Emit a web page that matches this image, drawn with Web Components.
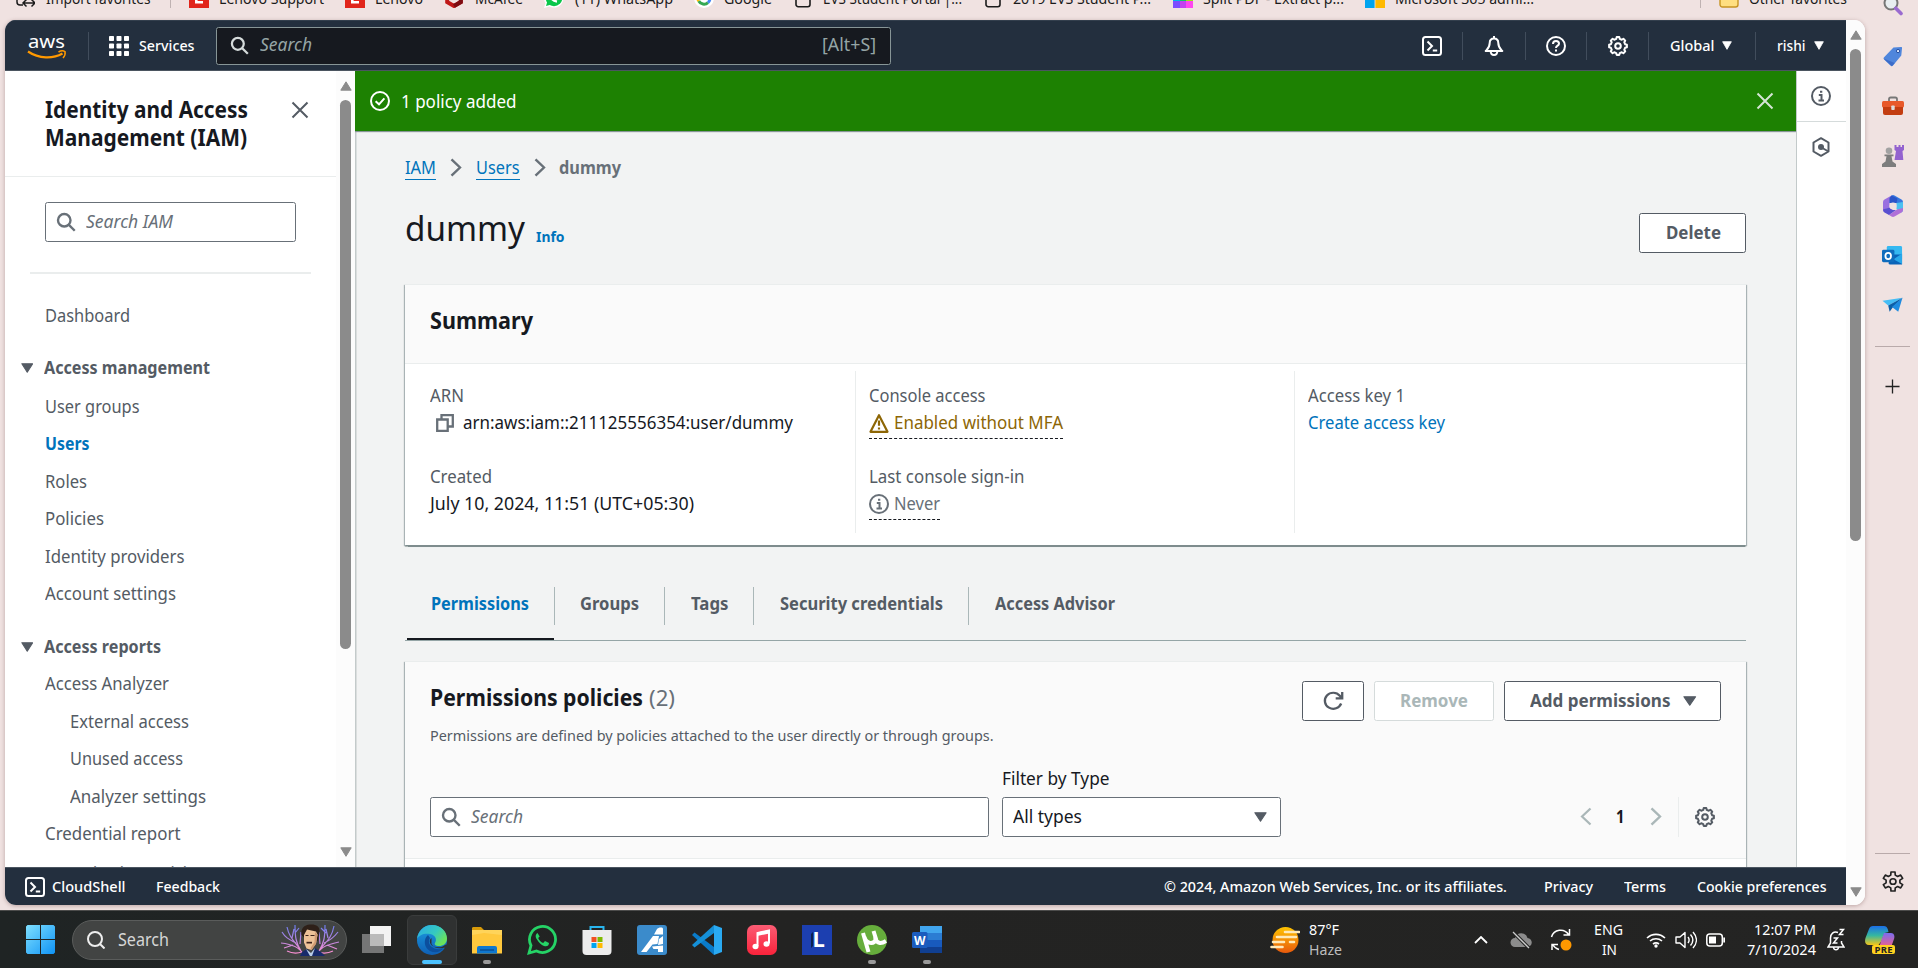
<!DOCTYPE html>
<html lang="en">
<head>
<meta charset="utf-8">
<title>dummy | IAM | Global</title>
<style>
html,body{margin:0;height:100%;overflow:hidden}
body{font-family:"Noto Sans","Open Sans",sans-serif;font-size:17.5px;color:#16191f;background:#f0e2e1}
</style>
</head>
<body>
<desktop-screen></desktop-screen>
<script>
/* Toothed outline used by the settings icons. */
function gear(c, n, ro, ri) {
  let d = '';
  for (let i = 0; i < n; i++) {
    const a = i * 2 * Math.PI / n, s = Math.PI / n;
    [[-.62, ri], [-.38, ro], [.38, ro], [.62, ri]].forEach(([k, r], j) => {
      d += (i + j ? 'L' : 'M') + (c + r * Math.sin(a + k * s)).toFixed(2) + ' ' + (c - r * Math.cos(a + k * s)).toFixed(2);
    });
  }
  return d + 'z';
}
const S = (body, w = 2) => `<g fill="none" stroke="currentColor" stroke-width="${w}">${body}</g>`;

/* name: [viewBox, markup] */
const ICONS = {
  search: ['0 0 16 16', S('<circle cx="6.6" cy="6.6" r="5"/><path d="M10.3 10.3 15 15"/>', 1.9)],
  close: ['0 0 16 16', S('<path d="M2 2l12 12M14 2 2 14"/>', 1.6)],
  tri: ['0 0 12 10', '<path fill="currentColor" stroke="currentColor" stroke-linejoin="round" d="M.8.8h10.4L6 9.3z"/>'],
  triup: ['0 0 12 10', '<path fill="currentColor" stroke="currentColor" stroke-linejoin="round" d="M.8 9.2h10.4L6 .8z"/>'],
  grid: ['0 0 20 20', '<g fill="currentColor">' + [0, 7.5, 15].map(y => [0, 7.5, 15].map(x => `<rect x="${x}" y="${y}" width="5" height="5" rx=".8"/>`).join('')).join('') + '</g>'],
  shell: ['0 0 20 20', S('<rect x="1" y="1" width="18" height="18" rx="2.5"/><path d="M5.5 5.5 10 10l-4.500 4.500M10.800 14.500h4.400"/>')],
  bell: ['0 0 20 20', S('<path stroke-linejoin="round" d="M10 2.500c-3 0-4.300 2-4.300 4.500 0 4.500-1.600 5.500-4 8h16.600c-2.400-2.500-4-3.500-4-8 0-2.500-1.300-4.500-4.300-4.500zM10 0v3M6.700 15.200c0 2.400 1.300 3.700 3.300 3.700s3.300-1.300 3.300-3.700"/>')],
  help: ['0 0 20 20', S('<circle cx="10" cy="10" r="9"/><path d="M7 8c0-2 1.300-3 3-3s3 1 3 2.700c0 2-3 2-3 4.300M10 13.400v2.200"/>')],
  gear: ['0 0 20 20', S(`<path stroke-linejoin="round" d="${gear(10, 8, 9, 7.3)}"/><circle cx="10" cy="10" r="2.800"/>`)],
  gearthin: ['0 0 20 20', S(`<path stroke-linejoin="round" d="${gear(10, 6, 9.300, 6.400)}"/><circle cx="10" cy="10" r="2.700"/>`, 1.5)],
  check: ['0 0 20 20', S('<circle cx="10" cy="10" r="9"/><path d="M5.600 10.200 9 13.300l5.400-6"/>')],
  chev: ['0 0 12 20', S('<path d="M1.500 1.500 10 10l-8.500 8.500"/>', 2.4)],
  chevl: ['0 0 12 20', S('<path d="M10.500 1.500 2 10l8.500 8.500"/>', 2.2)],
  info: ['0 0 20 20', S('<circle cx="10" cy="10" r="9"/><path d="M7.800 9H10.500v5.500M7.500 14.600h5.500M9 5.700h2.300"/>')],
  hex: ['0 0 20 20', S('<path stroke-linejoin="round" d="M10 1.200l7.500 4.300v9L10 18.800l-7.500-4.300v-9z"/>') + '<circle cx="10" cy="10" r="3" fill="currentColor"/>' + S('<path d="M10.500 10.500 17 14.300"/>', 1.8)],
  copy: ['0 0 18 18', S('<path d="M1.200 5.500h10.500v11.300H1.200zM5.500 5.500V1.200h11.300v11.300h-5"/>', 2.3)],
  warn: ['0 0 20 20', S('<path stroke-linejoin="round" d="M10 2.200 18.500 18.800h-17z"/><path d="M10 7.500v5.200M10 14.400v2.200"/>', 2.2)],
  refresh: ['0 0 20 20', S('<path d="M17.300 12.500A8 8 0 1 1 16 4.700l1.500 1.900M18.300 1v6.300h-6.200"/>', 2.2)],
  plus: ['0 0 16 16', S('<path d="M8 .5v15M.5 8h15"/>', 1.4)],
  aws: ['0 0 40 26', '<text x="1" y="14.500" font-family="Noto Sans" font-weight="400" font-size="18.500" fill="#fff" textLength="37" lengthAdjust="spacingAndGlyphs">aws</text><path d="M1 18.500c11 7.500 25 7.500 34.500 2" fill="none" stroke="#f90" stroke-width="2.200"/><path d="M31.500 19c2-1.200 5-1.300 6.500-.4.500 2-.6 4.800-2 6.400" fill="none" stroke="#f90" stroke-width="1.500"/>'],

  /* favourites */
  import: ['0 0 20 20', S('<path d="M8 17H5a3 3 0 0 1-3-3V4M18 4v6M8 15h12M11.500 11.500 8 15l3.500 3.500M16.500 11.500 20 15l-3.500 3.500"/>', 1.5)],
  lenovo: ['0 0 20 20', '<path fill="#e1251b" d="M0 0h20v20H0z"/><path fill="#fff" d="M6 5h2.600v8H14v2.400H6z"/>'],
  mcafee: ['0 0 20 20', '<path d="M3.200 5v9l6.800 4 6.800-4V5L10 8z" fill="none" stroke="#c01818" stroke-width="4"/><path d="M10 18l6.800-4V5" fill="none" stroke="#7e0c12" stroke-width="4"/>'],
  whatsmini: ['0 0 20 20', '<path fill="#fff" d="M10 0a9.800 9.800 0 1 1-4.500 18.600L0 20l1.500-5A9.800 9.800 0 0 1 10 0z"/><circle cx="10" cy="10" r="8.300" fill="#0ac64a"/><path fill="#0ac64a" d="M2 18l1.500-5 4 3.500z"/><path d="M6.500 7c.5 3.500 3 6 6.500 6.500" stroke="#fff" stroke-width="2.500" fill="none"/>'],
  google: ['0 0 20 20', '<circle cx="10" cy="10" r="10" fill="#fff"/><g fill="none" stroke-width="3"><path stroke="#34a853" d="M4.700 13a6 6 0 0 0 9.300 1.600"/><path stroke="#4285f4" d="M14 14.600c1.500-1.200 2-2.600 2-4.600h-6"/><path stroke="#fbbc05" d="M4.700 13a6 6 0 0 1 0-6"/></g>'],
  page: ['0 0 20 20', S('<path d="M3 0v16.500a2.200 2.200 0 0 0 2.200 2.200h9.600a2.200 2.200 0 0 0 2.200-2.200V0"/>', 1.6)],
  mosaic: ['0 0 20 20', '<path fill="#00b5e8" d="M0 6h7v7H0z"/><path fill="#15c46a" d="M7 6h6v7H7z"/><path fill="#9be31c" d="M13 6h7v7h-7z"/><path fill="#7c4dff" d="M0 13h7v7H0z"/><path fill="#c243f0" d="M7 13h6v7H7z"/><path fill="#ff46f0" d="M13 13h7v7h-7z"/>'],
  ms: ['0 0 20 20', '<path fill="#00a4ef" d="M0 10h9.600v10H0z"/><path fill="#ffb900" d="M10.400 10H20v10h-9.600z"/><path fill="#f25022" d="M0 0h9.600v9.600H0z"/><path fill="#7fba00" d="M10.400 0H20v9.600h-9.600z"/>'],
  folder: ['0 0 20 20', '<path d="M1 2h18v14.500a2.500 2.500 0 0 1-2.500 2.500h-13A2.500 2.500 0 0 1 1 16.500z" fill="#ffdf80" stroke="#c79422" stroke-width="1.400"/>'],

  /* edge rail */
  esearch: ['0 0 22 22', '<circle cx="9" cy="9" r="6.500" fill="#e8eef0" stroke="#777" stroke-width="2"/><path d="M13.800 14.200l5.200 5.300" stroke="#9a6bd0" stroke-width="3.600" stroke-linecap="round"/>'],
  tag: ['0 0 22 22', '<path d="M12 1.500 20 1c.8 0 1 .4 1 1l-.8 8-8.700 10.500c-.7.8-1.600.8-2.300.2l-7-6.600c-.7-.7-.7-1.500 0-2.200z" fill="#4f86dc"/><path d="M1.500 13l8.800 8.200 3-3.500z" fill="#3c6cc9"/><circle cx="16.800" cy="5.300" r="1.700" fill="#dceaff" stroke="#234a9c"/>'],
  toolbox: ['0 0 22 22', '<path d="M7 7V4.200C7 3 7.500 2.500 8.700 2.500h4.600c1.200 0 1.700.5 1.700 1.700V7" fill="none" stroke="#777" stroke-width="1.800"/><rect y="6" width="22" height="6.500" rx="1.500" fill="#e8592a"/><path d="M1 12h20v6a2 2 0 0 1-2 2H3a2 2 0 0 1-2-2z" fill="#c33d11"/><rect x="9.300" y="10.500" width="3.400" height="4.500" rx=".8" fill="#ddd"/>'],
  chess: ['0 0 22 22', '<path d="M12.500 0h2v2h2V0h2v2h1.500V0h2v5l-1.500 1 .8 9H12.500l1.500-9-1.500-1z" fill="#9362cf"/><circle cx="7" cy="5.800" r="3.300" fill="#a2a2a2"/><path d="M2.500 9.500h9v1.800H9.500l1 5.200 3.500 2.500v3H0v-3l3.500-2.500 1-5.200h-2z" fill="#7d7d7d"/>'],
  m365: ['0 0 20 22', '<path d="M8.500.5 1.500 4.500A3 3 0 0 0 0 7v8.500l6.500-3V8z" fill="#9a6fe0"/><path d="M8.500.5a3 3 0 0 1 3 0l7 4A3 3 0 0 1 20 7v4.500L13.500 8 6.500 8z" fill="#3578e0"/><path d="M8.500.5 6.500 3v5l7 0 1-4.500z" fill="#2b55c8"/><path d="M20 7v8a3 3 0 0 1-1.500 2.500L13.500 14V8z" fill="#4cc0f0"/><path d="M20 13v2a3 3 0 0 1-1.500 2.500l-7 4a3 3 0 0 1-3 0L6 20l8-5.500z" fill="#b06fd8"/><path d="M0 14.500 6.500 12.500 10 15l3 0L6 20l-4.500-2.500A3 3 0 0 1 0 15z" fill="#5a4fd0"/><circle cx="10" cy="11" r="3.500" fill="#f0e2e1"/>'],
  outlook: ['0 0 22 22', '<rect x="5" y="1" width="16" height="15" rx="1.500" fill="#35b8f1"/><path d="M7 10h14v10.500H8.500A1.500 1.500 0 0 1 7 19z" fill="#0a63b8"/><path d="M21 9v11l-9-5z" fill="#28a8ea"/><rect y="5" width="13" height="13" rx="1.500" fill="#0f6cbd"/><ellipse cx="6.500" cy="11.500" rx="2.900" ry="3.300" fill="none" stroke="#fff" stroke-width="1.900"/>'],
  plane: ['0 0 22 22', '<path d="M21.500 4 .5 7l6 5z" fill="#45bdf5"/><path d="M21.500 4 6.500 12l1.500 6.500 3-4z" fill="#0c5fa8"/><path d="M21.500 4 10.500 13.500l6.500 5z" fill="#1f8be0"/>'],

  /* taskbar */
  win: ['0 0 29 29', '<defs><linearGradient id="a" x2="1" y2="1"><stop stop-color="#7fe0ff"/><stop offset="1" stop-color="#0f93f5"/></linearGradient></defs><path fill="url(#a)" d="M1.500 0H14v14H0V1.500zM15 0h12.500L29 1.500V14H15zM0 15h14v14H1.500L0 27.500zM15 15h14v12.500L27.500 29H15z"/>'],
  tsearch: ['0 0 18 18', S('<circle cx="8" cy="8" r="7"/><path d="M13 13l4.500 4.500"/>')],
  tesla: ['0 0 60 32', '<defs><linearGradient id="b" y2="1" x2="0"><stop stop-color="#6a7cf0"/><stop offset="1" stop-color="#ff8fd0"/></linearGradient></defs><g fill="none" stroke="url(#b)" stroke-width="1.200"><path d="M23 30C19 22 10 20 1 19M20 25C14 17 9 13 7 3M16 19C8 15 5 13 2 8M21 27c-5-8-6-14-6-26M22 28c-6 2-11 1-15-1M15 9 19 4M12 14l2-9M20 20l1-12M13 21l-9 3M37 30c4-8 13-10 22-12M41 24c6-7 11-11 13-22M44 19c7-3 11-7 14-11M39 27c5-8 6-14 6-26M38 28c6 2 11 1 15-1M46 9l-5-5M48 14l-2-9M40 20 39 8M47 21l10 4"/></g><path d="M21.500 11C20.500 5 24 .8 30 .5c6-.5 10 2 9.500 7l-1.500 9-2 1-2-9-8-1-2 6z" fill="#2e2019"/><path d="M24 11l3-5.500 9 2 1.500 3-1.500 9-4.500 6.500-5-1.500-2.500-6z" fill="#edc298"/><path d="M35 8l2.500 3-1.500 9-4.500 6-1-2 4-6z" fill="#cf9a72"/><path d="M26.500 17.800h5.500v1.700h-5.500z" fill="#3a221a"/><path d="M25.500 11h3v1.100h-3zM30.500 11h4v1.100h-4z" fill="#3a221a"/><path d="M20 32l2-4 5-3 4 5 4-6 6 4 4 4z" fill="#172a6b"/><path d="M26 25l5 4 4-5-3 8h-2z" fill="#b9cde8"/>'],
  taskview: ['0 0 30 28', '<path fill="#f3f3f3" d="M8 0h21v20H8z"/><path fill="#8b8b8b" fill-opacity=".8" d="M0 8h22v19H0z"/><path fill="#bababa" d="M8 8h14v12H8z"/>'],
  edge: ['0 0 30 30', '<defs><linearGradient id="c" x2="1" y2=".6"><stop stop-color="#2aa8e8"/><stop offset=".6" stop-color="#35c9c0"/><stop offset="1" stop-color="#6be25a"/></linearGradient><linearGradient id="d" y2="1" x2="0"><stop stop-color="#1b9de2"/><stop offset="1" stop-color="#0f5fb5"/></linearGradient></defs><circle cx="15" cy="15" r="15" fill="url(#d)"/><path d="M0 14C1 6 7 0 15 0c9 0 15 6.500 15 13.500 0 5-4 7.500-8 7.500-3.500 0-5-1.500-4-3 2-3 1-8-5-9C7 8 2 10 0 14z" fill="url(#c)"/><path d="M11 10c-5 4-4 13 2 16 5 2.500 11 1 14-3-4 2-9 1.500-12-1-3-2-4-6-2-9z" fill="#0c4f9e"/><path d="M14.500 13c-3 2-2 7 2 8.500 4 1.500 9 1 12-2l3 3-2 2c-1.500-2-2-2-3.500-1.500-5 1-10-.5-11.500-4z" fill="#2f3131"/>'],
  explorer: ['0 0 30 30', '<path d="M0 3a1.500 1.500 0 0 1 1.500-1H9l3 3H0z" fill="#d79a09"/><path d="M0 5h30v23.500H0z" fill="#ffc83d"/><path d="M0 5h30v5L12 8 0 10z" fill="#ffd867" opacity=".7"/><path d="M5 28.500V23a2 2 0 0 1 2-2h16a2 2 0 0 1 2 2v5.500z" fill="#0f78cf"/><path d="M8 25h14" stroke="#0a4f94" stroke-width="1.500"/>'],
  whatsapp: ['0 0 30 30', '<path d="M2 28l2-7.500A13 13 0 1 1 9.500 26z" fill="none" stroke="#25d366" stroke-width="2.800"/><path d="M10.500 8c-2 1.500-2.500 3.500-.5 6.500s4 5.500 7 6.500c3 1 5-.5 5-3l-4-2-1.800 2c-2.500-1-4-2.500-5-5l1.500-1.500z" fill="#25d366"/>'],
  store: ['0 0 30 30', '<path d="M8.500 6V2h13v4" fill="none" stroke="#28b5ee" stroke-width="2"/><path d="M.5 5h29v21a4 4 0 0 1-4 4h-21a4 4 0 0 1-4-4z" fill="#ececec"/><path d="M9.500 12h5v5h-5z" fill="#f25022"/><path d="M15.500 12h5v5h-5z" fill="#7fba00"/><path d="M9.500 18h5v5h-5z" fill="#00a4ef"/><path d="M15.500 18h5v5h-5z" fill="#ffb900"/>'],
  ai: ['0 0 30 30', '<rect width="30" height="30" rx="3" fill="#3b8bcb"/><path d="M4 27 16 11h6l-1.500 8-5 .5L9.500 27zM17 9.500l3-5.500c1-1.500 6-2.500 6 0v5.500zM22 14l4-3v8l-5 1zM15 21.500l11-1v6.500h-5v-3h-4.500z" fill="#fff"/>'],
  vscode: ['0 0 30 30', '<path d="M0 10l2.500-2.500L22 22v8z" fill="#0a7bc9"/><path d="M0 20l2.500 2.500L22 8V0z" fill="#1590d8"/><path d="M22 0l8 3v24l-8 3z" fill="#2aaaf2"/>'],
  music: ['0 0 30 30', '<defs><linearGradient id="e" x2="0" y2="1"><stop stop-color="#fb5c74"/><stop offset="1" stop-color="#fa233b"/></linearGradient></defs><rect width="30" height="30" rx="6.500" fill="url(#e)"/><path d="M10.500 21V8l11.500-2.500v13" fill="none" stroke="#fff" stroke-width="2"/><path d="M10 7.500 22.500 5v3.500L10 11z" fill="#fff"/><ellipse cx="8.500" cy="21.500" rx="3" ry="2.700" fill="#fff"/><ellipse cx="19.500" cy="19" rx="3" ry="2.700" fill="#fff"/>'],
  lapp: ['0 0 30 30', '<path fill="#1c3fb0" d="M0 0h30v30H0z"/><path d="M11 7v14l-2 2V9z" fill="#0b2350"/><text x="10.500" y="22" font-family="Noto Sans" font-weight="700" font-size="22" fill="#fff">L</text>'],
  utor: ['0 0 30 30', '<circle cx="15" cy="15" r="15" fill="#66ad3c"/><path d="M6 8l5.500 19M7.500 12c1.500 7 9.500 8 11.500 2L16.500 6M18 12c1.500 7 6 7 11 4" fill="none" stroke="#fff" stroke-width="4"/>'],
  word: ['0 0 30 30', '<path fill="#41a5ee" d="M8 1h22v7H8z"/><path fill="#2b7cd3" d="M8 8h22v7H8z"/><path fill="#185abd" d="M8 15h22v7H8z"/><path fill="#103f91" d="M8 22h22v6H8z"/><rect y="7" width="15.500" height="16" rx="1.500" fill="#1b5cbe"/><text x="2" y="19.500" font-family="Noto Sans" font-weight="700" font-size="12.500" fill="#fff" textLength="11.500" lengthAdjust="spacingAndGlyphs">W</text>'],
  haze: ['0 0 30 28', '<defs><linearGradient id="f" x2="0" y2="1"><stop stop-color="#ffc400"/><stop offset="1" stop-color="#e8590c"/></linearGradient></defs><circle cx="15.500" cy="14" r="13" fill="url(#f)"/><g stroke="#ffe9b8" stroke-width="2.600" stroke-linecap="round"><path d="M15 6h14M7 11h19M3 16h11M20 16h4M1.500 21h11"/></g>'],
  up: ['0 0 14 8', S('<path d="M1 7l6-6 6 6"/>', 1.800)],
  cloudoff: ['0 0 22 18', '<path d="M5 16a4.500 4.500 0 0 1 0-9 6.500 6.500 0 0 1 12.500 0A4.500 4.500 0 0 1 17 16z" fill="#8c8c8c"/><path d="M3 1l16 16" stroke="#232423" stroke-width="3.500"/><path d="M3 1l16 16" stroke="#ccc" stroke-width="1.300"/>'],
  sync: ['0 0 22 24', S('<path d="M1.500 9A9.500 9.500 0 0 1 18.500 6.500M19.500 1v6h-6M9 21.500A9.500 9.500 0 0 1 3 17M2 22v-5.500h6"/>', 1.500) + '<circle cx="16" cy="17" r="5.500" fill="#ff9800"/>'],
  wifi: ['0 0 20 16', S('<path d="M1 6a13 13 0 0 1 18 0M4 9a9 9 0 0 1 12 0M7 12a5 5 0 0 1 6 0"/>', 1.600) + '<circle cx="10" cy="14" r="1.700" fill="currentColor"/>'],
  vol: ['0 0 22 18', S('<path stroke-linejoin="round" d="M1 6h4l5-4.500v15L5 12H1zM13 6c1.500 2 1.500 4 0 6M15.500 3.500c3 3.500 3 7.500 0 11M18 1c4.500 5 4.500 11 0 16"/>', 1.400)],
  batt: ['0 0 20 14', S('<rect x=".8" y="1" width="15.500" height="12" rx="3"/>', 1.500) + '<path d="M3 3.500h7v7H3zM17.300 4.500h1.700v5h-1.700z" fill="currentColor"/>'],
  zbell: ['0 0 18 24', S('<path d="M11 4.500C6.500 3 3.500 6 3.500 10v5L1 19h16l-2.500-4v-2M6.500 19.500c.5 3 4.500 3 5 0M12.500 1.500h4l-4 5h4M6.500 10h4l-4 5h4"/>', 1.500)],
  copilot: ['0 0 30 28', '<defs><linearGradient id="g" x2="0" y2="1"><stop stop-color="#1b6fe8"/><stop offset=".5" stop-color="#35b7a0"/><stop offset="1" stop-color="#f5c518"/></linearGradient><linearGradient id="h" x2="0" y2="1"><stop stop-color="#7b6cf0"/><stop offset="1" stop-color="#ff5f7a"/></linearGradient></defs><path d="M8 0h11c3 0 4 3 4.500 6l-4 1-3 8-3 4H4c-4 0-4.500-3-3.500-7L4 3c.7-2 2-3 4-3z" fill="url(#g)"/><path d="M19 7h7c3 0 4 3 3 6l-2.500 7c-.8 2-2 3-4 3H11c3-1 4-4 5-8z" fill="url(#h)"/><rect x="7" y="19" width="23" height="9" rx="2" fill="#ffd21f"/><text x="9.500" y="26.800" font-family="Noto Sans" font-weight="700" font-size="9.500" fill="#222" textLength="18">PRE</text>']
};

/* Markup helpers */
const T = (s, w, ml = 0, cls = '') => `<ui-text w="${w}" class="${cls}" style="margin-left:${ml}px">${s}</ui-text>`;
const I = (n, w, h = w, ml = 0, cls = '') => `<ui-icon name="${n}" class="${cls}" style="width:${w}px;height:${h}px;margin-left:${ml}px"></ui-icon>`;

const texts = [];

/* Single-line label set to a given measure. */
class UiText extends HTMLElement {
  connectedCallback() {
    if (this.shadowRoot) return;
    this.attachShadow({mode: 'open'}).innerHTML =
      '<style>:host{display:block;flex:none;white-space:nowrap}span{display:inline-block;transform-origin:0 50%}</style><span><slot></slot></span>';
    this.style.width = this.getAttribute('w') + 'px';
    texts.push(this);
  }
  fit() {
    const s = this.shadowRoot.querySelector('span');
    const n = s.getBoundingClientRect().width;
    if (n) s.style.transform = `scaleX(${(this.getAttribute('w') / n).toFixed(4)})`;
  }
}
customElements.define('ui-text', UiText);

class UiIcon extends HTMLElement {
  connectedCallback() {
    if (this.shadowRoot) return;
    const [vb, body] = ICONS[this.getAttribute('name')];
    this.attachShadow({mode: 'open'}).innerHTML =
      `<style>:host{display:block;flex:none}svg{display:block;width:100%;height:100%}</style><svg viewBox="${vb}" preserveAspectRatio="none">${body}</svg>`;
  }
}
customElements.define('ui-icon', UiIcon);

function define(name, css, html) {
  const tpl = document.createElement('template');
  tpl.innerHTML = `<style>*{box-sizing:border-box}${css}</style>${html}`;
  customElements.define(name, class extends HTMLElement {
    connectedCallback() {
      if (this.shadowRoot) return;
      this.attachShadow({mode: 'open'}).appendChild(tpl.content.cloneNode(true));
    }
  });
}

define('ui-scrollbar', `
:host{display:flex;flex-direction:column;align-items:center;background:#fcfcfc;color:#8b8b8b;box-sizing:border-box}
.thumb{width:11px;border-radius:6px;background:#8b8b8b;height:var(--thumb);margin:9px 0 auto}
`, `${I('triup', 12, 10)}<div class="thumb"></div>${I('tri', 12, 10)}`);

define('ui-button', `
:host{display:flex;align-items:center;height:40px;box-sizing:border-box;border:1.25px solid #545b64;border-radius:2.5px;background:#fff;color:#545b64;font-weight:700;line-height:30px}
:host([disabled]){border-color:#d5dbdb;color:#aab7b8}
::slotted(ui-text){padding-bottom:3px}
`, `<slot></slot>`);

define('ui-field', `
:host{display:flex;align-items:center;height:40px;box-sizing:border-box;border:1.25px solid #687078;border-radius:2.5px;background:#fff;line-height:30px}
::slotted(ui-text){padding-bottom:1.500px}
`, `<slot></slot>`);

define('browser-favorites', `
:host{display:block;height:20px;overflow:hidden;font-size:15px;color:#1b1b1b;line-height:30px}
.row{display:flex;align-items:center;height:30px;margin-top:-17px}
.sep{width:1px;height:20px;background:#bfb2b2}
`, `<div class="row">
${I('import', 20, 20, 15)}${T('Import favorites', 104.5, 10.5)}
<div class="sep" style="margin-left:20px"></div>
${I('lenovo', 20, 20, 18)}${T('Lenovo Support', 105, 10)}
${I('lenovo', 20, 20, 21)}${T('Lenovo', 48, 10)}
${I('mcafee', 20, 20, 21)}${T('McAfee', 48, 11)}
${I('whatsmini', 20, 20, 21)}${T('(11) WhatsApp', 98, 11)}
${I('google', 20, 20, 21)}${T('Google', 48, 10)}
${I('page', 20, 20, 20.5)}${T('EVS Student Portal |...', 139, 10.500)}
${I('page', 20, 20, 21)}${T('2019 EVS Student P...', 138, 10)}
${I('mosaic', 20, 20, 22)}${T('Split PDF - Extract p...', 141, 10)}
${I('ms', 20, 20, 21)}${T('Microsoft 365 admi...', 139, 10)}
<div class="sep" style="margin-left:166px"></div>
${I('folder', 20, 20, 18)}${T('Other favorites', 98, 10)}
</div>`);

define('edge-rail', `
:host{display:flex;flex-direction:column;align-items:center;width:53px;box-sizing:border-box;padding-left:2px;overflow:hidden;color:#222}
hr{width:35px;border:0;height:1px;background:#b9aaaa;margin:0;flex:none}
ui-icon{margin-left:0!important}
`, `
<div style="height:16px;flex:none;display:flex;align-items:flex-end">${I('esearch', 22, 22)}</div>
<div style="height:30px;flex:none"></div>${I('tag', 21, 21)}
<div style="height:28px;flex:none"></div>${I('toolbox', 22, 22)}
<div style="height:28px;flex:none"></div>${I('chess', 22, 22)}
<div style="height:28px;flex:none"></div>${I('m365', 20, 22)}
<div style="height:28px;flex:none"></div>${I('outlook', 21, 21)}
<div style="height:28px;flex:none"></div>${I('plane', 21, 21)}
<div style="height:31px;flex:none"></div><hr>
<div style="height:32px;flex:none"></div>${I('plus', 15, 15)}
<div style="flex:1"></div><hr>
<div style="height:17px;flex:none"></div>${I('gearthin', 22, 21)}
<div style="height:18px;flex:none"></div>`);

define('aws-header', `
:host{display:flex;align-items:center;height:51px;box-sizing:border-box;background:#232f3e;border-bottom:1.500px solid #4b5560;border-top:1px solid #333f4d;color:#fff;font-size:15px;font-weight:500;line-height:20px}
.sep{width:1px;height:28px;background:#414d5c;flex:none}
.box{display:flex;align-items:center;width:675px;height:38px;margin-left:21px;border:1.250px solid #879596;border-radius:2.500px;background:#16191f;font-size:17.500px;font-weight:400;color:#95a5a6;line-height:30px}
.box ui-icon{color:#d5dbdb}
ui-text{padding-bottom:1px}
.box ui-text{padding-bottom:2.500px}
.it{font-style:italic}
`, `
${I('aws', 40, 26, 22)}<div class="sep" style="margin-left:21px"></div>
${I('grid', 20, 20, 20)}${T('Services', 55.5, 10)}
<div class="box">${I('search', 19, 19, 13.500)}${T('Search', 52, 10.500, 'it')}${T('[Alt+S]', 54, 510)}</div>
${I('shell', 20, 20, 531)}<div class="sep" style="margin-left:20px"></div>
${I('bell', 20, 20, 21)}<div class="sep" style="margin-left:21px"></div>
${I('help', 20, 20, 20)}<div class="sep" style="margin-left:20px"></div>
${I('gear', 20, 20, 21)}<div class="sep" style="margin-left:20px"></div>
${T('Global', 44.500, 21)}${I('tri', 10, 9, 8)}<div class="sep" style="margin-left:23px"></div>
${T('rishi', 28.500, 21)}${I('tri', 10, 9, 8)}`);

define('iam-nav', `
:host{display:flex;width:350px;flex:none;background:#fff;color:#545b64}
.col{width:331px;overflow:hidden}
ui-scrollbar{width:19px;padding:10px 0;padding-right:0;--thumb:549px}
.head{display:flex;height:105.5px;border-bottom:1.500px solid #eaeded;padding:25px 0 0 40px}
.head ui-icon{margin-top:4px}
h2{margin:0;font-size:22.500px;line-height:27.700px;font-weight:700;color:#16191f}
ui-field{width:251px;margin:25.500px 0 0 40px;color:#687078}
.it{font-style:italic}
hr{border:0;height:1.500px;background:#eaeded;width:281px;margin:30px 0 23px 25px}
.row{display:flex;align-items:center;height:37.500px;line-height:37.500px;padding-left:40px}
.sub{padding-left:65px}
.sec{padding-left:15.500px;font-weight:700}
.on{color:#0073bb;font-weight:700}
`, `
<div class="col">
<div class="head"><h2>${T('Identity and Access', 203)}${T('Management (IAM)', 202)}</h2>${I('close', 20, 20, 42)}</div>
<ui-field>${I('search', 20, 20, 9.500)}${T('Search IAM', 87, 10.500, 'it')}</ui-field>
<hr>
<div class="row">${T('Dashboard', 85)}</div>
<div class="row sec" style="margin-top:15px">${I('tri', 12.500, 10)}${T('Access management', 166, 10.500)}</div>
<div class="row" style="margin-top:1.400px">${T('User groups', 94.500)}</div>
<div class="row on">${T('Users', 44.500)}</div>
<div class="row">${T('Roles', 42)}</div>
<div class="row">${T('Policies', 59)}</div>
<div class="row">${T('Identity providers', 139.500)}</div>
<div class="row">${T('Account settings', 131)}</div>
<div class="row sec" style="margin-top:15px">${I('tri', 12.500, 10)}${T('Access reports', 117, 10.500)}</div>
<div class="row">${T('Access Analyzer', 124)}</div>
<div class="row sub">${T('External access', 119)}</div>
<div class="row sub">${T('Unused access', 113)}</div>
<div class="row sub">${T('Analyzer settings', 136)}</div>
<div class="row">${T('Credential report', 135.500)}</div>
<div class="row" style="margin-top:2px">${T('Organization activity', 156)}</div>
</div>
<ui-scrollbar></ui-scrollbar>`);

define('iam-flash', `
:host{display:flex;align-items:center;height:60px;flex:none;background:#1d8102;color:#fff;line-height:52px;box-shadow:0 1px 1px #879596;padding-left:15px}
ui-text{padding-bottom:1px}
.x{color:#d5e5d5}
`, `${I('check', 20, 20)}${T('1 policy added', 115.500, 11)}${I('close', 20, 20, 1238, 'x')}`);

define('iam-crumbs', `
:host{display:flex;align-items:center;height:30px;margin:21px 0 0 50px;color:#687078;line-height:30px}
a{color:#0073bb;line-height:23px;border-bottom:1.500px solid #0073bb;margin-top:1px}
.b{font-weight:700}
`, `<a>${T('IAM', 31)}</a>${I('chev', 12, 19, 14)}<a style="margin-left:14px">${T('Users', 43.500)}</a>${I('chev', 12, 19, 14)}${T('dummy', 62, 13.500, 'b')}`);

define('iam-title', `
:host{display:flex;height:40px;margin:31px 50px 0 50px;align-items:flex-start;line-height:30px}
h1{margin:0;font-size:35px;font-weight:400}
.info{color:#0073bb;font-size:15px;font-weight:700;margin-top:7.500px}
ui-button{margin-left:auto;width:107px}
`, `<h1>${T('dummy', 120)}</h1>${T('Info', 28.500, 10.500, 'info')}<ui-button>${T('Delete', 55, 25.500)}</ui-button>`);

define('iam-card', `
:host{display:flex;flex-direction:column;flex:none;width:1341px;box-sizing:border-box;margin-left:50px;background:#fff;border-top:1px solid #eaeded;box-shadow:0 1.500px 1px #7e8c8d,1px 1px 1px rgba(0,28,36,.28),-1px 1px 1px rgba(0,28,36,.28)}
header{background:#fafafa;border-bottom:1.500px solid #eaeded}
`, `<header><slot name="header"></slot></header><slot></slot>`);

define('iam-summary', `
:host{display:block}
iam-card{height:261px;margin-top:31px}
h2{margin:0;height:78px;padding:19px 0 0 25px;font-size:22.500px;line-height:33px}
.cols{display:flex;padding-top:7px}
.cols>div{height:162px;padding:11px 0 0 13px;width:439px;border-left:1px solid #eaeded;flex:none;line-height:27px}
.cols>div:first-child{width:450px;padding-left:25px;border:0}
.f{height:81px}
.l{color:#545b64}
.v{display:flex;align-items:center}
.st{display:inline-flex;align-items:center;padding-bottom:2px;border-bottom:1.250px dashed #16191f}
.w{color:#8d6605}.n{color:#687078}.a{color:#0073bb}
`, `<iam-card><h2 slot="header">${T('Summary', 103)}</h2>
<div class="cols">
<div><div class="f">${T('ARN', 34, 0, 'l')}<div class="v">${I('copy', 18, 18, 6, 'n')}${T('arn:aws:iam::211125556354:user/dummy', 330, 9)}</div></div>
<div class="f">${T('Created', 62, 0, 'l')}<div class="v">${T('July 10, 2024, 11:51 (UTC+05:30)', 264)}</div></div></div>
<div><div class="f">${T('Console access', 116.500, 0, 'l')}<div class="st w">${I('warn', 20, 20)}${T('Enabled without MFA', 169, 5)}</div></div>
<div class="f">${T('Last console sign-in', 155.500, 0, 'l')}<div class="st n">${I('info', 20, 20)}${T('Never', 46, 5)}</div></div></div>
<div><div class="f">${T('Access key 1', 97, 0, 'l')}${T('Create access key', 137, 0, 'a')}</div></div>
</div></iam-card>`);

define('iam-tabs', `
:host{display:flex;height:68px;flex:none;box-sizing:border-box;margin:28px 50px 0 50px;border-bottom:1.500px solid #95a5a6;color:#545b64;font-weight:700;line-height:61px}
.tab{display:flex;height:67px}
.on{color:#0073bb;border-bottom:2px solid #16191f;margin-left:2px;padding:0 24.500px 0 24px}
.sep{width:1px;height:38px;margin-top:14px;background:#aab7b8}
`, `<div class="tab on">${T('Permissions', 98)}</div><div class="sep"></div>
<div class="tab">${T('Groups', 59, 25)}</div><div class="sep" style="margin-left:25px"></div>
<div class="tab">${T('Tags', 37.500, 26)}</div><div class="sep" style="margin-left:24.500px"></div>
<div class="tab">${T('Security credentials', 163, 26)}</div><div class="sep" style="margin-left:25.500px"></div>
<div class="tab">${T('Access Advisor', 120, 25.500)}</div>`);

define('iam-policies', `
:host{display:block}
iam-card{margin-top:20px;height:260px}
.h{height:196px;padding:19px 0 0 25px}
.row{display:flex;align-items:flex-start}
h2{display:flex;margin:0;font-size:22.500px;line-height:34.500px;height:40px}
.c{font-weight:400;color:#687078}
.d{font-size:15px;line-height:20px;color:#545b64;margin-top:3.500px}
.fl{line-height:20px;margin-top:23px}
.ctl{display:flex;align-items:center;margin-top:9px}
.s{color:#687078}.g{color:#545b64}.p{color:#aab7b8}
.it{font-style:italic}
.b{font-weight:700}
.ctl>.b{padding-bottom:1px}
.sep{width:1px;height:40px;background:#eaeded;margin-left:16px}
`, `<iam-card><div class="h" slot="header">
<div class="row"><h2>${T('Permissions policies', 213)}${T('(2)', 26, 6, 'c')}</h2>
<ui-button style="width:62px;margin-left:627px">${I('refresh', 21, 20, 20)}</ui-button>
<ui-button disabled style="width:120px;margin-left:10px">${T('Remove', 68, 25)}</ui-button>
<ui-button style="width:217px;margin-left:10px">${T('Add permissions', 140.500, 24.500)}${I('tri', 13.500, 10, 13)}</ui-button></div>
<div class="d">${T('Permissions are defined by policies attached to the user directly or through groups.', 563.500)}</div>
<div class="fl">${T('Filter by Type', 107.500, 572)}</div>
<div class="ctl"><ui-field style="width:559px" class="s">${I('search', 20, 20, 9.500)}${T('Search', 52, 10, 'it')}</ui-field>
<ui-field style="width:279px;margin-left:13px">${T('All types', 69, 10)}${I('tri', 13, 10, 172, 'g')}</ui-field>
${I('chevl', 12, 19, 299, 'p')}${T('1', 8.500, 23.500, 'b')}${I('chev', 12, 19, 25.500, 'p')}<div class="sep"></div>${I('gear', 20, 20, 16.500, 'g')}</div>
</div></iam-card>`);

define('iam-main', `
:host{display:flex;flex-direction:column;width:1441px;flex:none;overflow:hidden;background:#f2f3f3;box-shadow:inset 1.500px 0 #c3caca}
`, `<iam-flash></iam-flash><iam-crumbs></iam-crumbs><iam-title></iam-title><iam-summary></iam-summary><iam-tabs></iam-tabs><iam-policies></iam-policies>`);

define('iam-tools', `
:host{display:flex;flex-direction:column;align-items:center;width:50px;box-sizing:border-box;flex:none;background:#fff;border-left:1.500px solid #c3caca;color:#545b64}
div{display:flex;align-items:center;justify-content:center;width:100%;height:51px;border-bottom:1px solid #d5dbdb;flex:none}
div+div{border:0;height:50px}
ui-icon{margin-right:1px}
`, `<div>${I('info', 20, 20)}</div><div>${I('hex', 20, 20)}</div>`);

define('aws-footer', `
:host{display:flex;align-items:center;height:38px;flex:none;box-sizing:border-box;background:#232f3e;border-top:1px solid #4b5560;color:#fff;font-size:15px;font-weight:500;line-height:24px}
ui-text{padding-bottom:2px}
`, `${I('shell', 20, 20, 20)}${T('CloudShell', 73.500, 6.500)}${T('Feedback', 64, 31)}
${T('© 2024, Amazon Web Services, Inc. or its affiliates.', 343, 944)}${T('Privacy', 49, 37)}${T('Terms', 42, 31)}${T('Cookie preferences', 129.500, 31)}`);

define('browser-window', `
:host{display:flex;width:1860px;height:885px;margin-left:5px;border-radius:11px;overflow:hidden;background:#fff;box-shadow:0 1px 4px rgba(90,50,50,.35)}
.page{width:1841px;display:flex;flex-direction:column;flex:none}
.mid{display:flex;height:796px;flex:none;overflow:hidden}
.outer{width:19px;padding:10px 0 8px;--thumb:492px}
`, `<div class="page"><aws-header></aws-header><div class="mid"><iam-nav></iam-nav><iam-main></iam-main><iam-tools></iam-tools></div><aws-footer></aws-footer></div><ui-scrollbar class="outer"></ui-scrollbar>`);

define('task-app', `
:host{display:flex;flex-direction:column;align-items:center;width:50px;height:50px;margin-right:5px;border-radius:6px;padding-top:10px;box-sizing:border-box;flex:none}
:host([active]){background:#2f3131;border:1px solid #3a3c3c;padding-top:9px}
.m{margin-top:5px;width:8px;height:4px;border-radius:2px;background:transparent;flex:none}
:host([running]) .m{background:#9a9a9a}
:host([active]) .m{background:#4cc2ff;width:20px}
`, `<slot></slot><div class="m"></div>`);

define('win-taskbar', `
:host{display:flex;align-items:center;height:58px;box-sizing:border-box;background:linear-gradient(90deg,#1f2424,#232322 40%,#242423);border-top:1.500px solid #4c4c4b;color:#fff;font-size:15px;line-height:20px}
.pill{display:flex;align-items:center;width:275px;height:40px;border-radius:20px;margin-left:17px;background:#424443;border:1px solid #5a5c5b;color:#d6d6d6;font-size:17.500px;line-height:30px}
.pill ui-text{padding-bottom:1px}
.pill ui-icon{color:#eee}
.apps{display:flex;margin-left:15px}
.t{display:flex;flex-direction:column;padding-bottom:1px}
.h{color:#bdbdbd}
`, `${I('win', 29, 29, 26)}
<div class="pill">${I('tsearch', 18, 18, 14)}${T('Search', 51, 13)}${I('tesla', 60, 32, 111)}</div>
${I('taskview', 30, 28, 15)}
<div class="apps">
<task-app active>${I('edge', 30, 30)}</task-app><task-app running>${I('explorer', 30, 30)}</task-app><task-app>${I('whatsapp', 30, 30)}</task-app><task-app>${I('store', 30, 30)}</task-app><task-app>${I('ai', 30, 30)}</task-app><task-app>${I('vscode', 30, 30)}</task-app><task-app>${I('music', 30, 30)}</task-app><task-app>${I('lapp', 30, 30)}</task-app><task-app running>${I('utor', 30, 30)}</task-app><task-app running>${I('word', 30, 30)}</task-app></div>
${I('haze', 30, 28, 313)}<div class="t" style="margin-left:9px">${T('87°F', 30)}${T('Haze', 33, 0, 'h')}</div>
${I('up', 14, 8, 132)}${I('cloudoff', 22, 18, 22)}${I('sync', 22, 24, 18)}
<div class="t" style="margin-left:22px">${T('ENG', 29)}${T('IN', 15, 7.500)}</div>
${I('wifi', 20, 16, 23)}${I('vol', 22, 18, 9)}${I('batt', 20, 14, 9)}
<div class="t" style="margin-left:21px">${T('12:07 PM', 62, 7)}${T('7/10/2024', 69)}</div>
${I('zbell', 18, 24, 11)}${I('copilot', 30, 28, 20)}`);

define('desktop-screen', `
:host{display:flex;flex-direction:column;width:1918px;height:968px;overflow:hidden}
.top{display:flex;height:910px;flex:none}
.left{width:1865px;flex:none}
`, `<div class="top"><div class="left"><browser-favorites></browser-favorites><browser-window></browser-window></div><edge-rail></edge-rail></div><win-taskbar></win-taskbar>`);

texts.forEach(t => t.fit());
</script>
</body>
</html>
